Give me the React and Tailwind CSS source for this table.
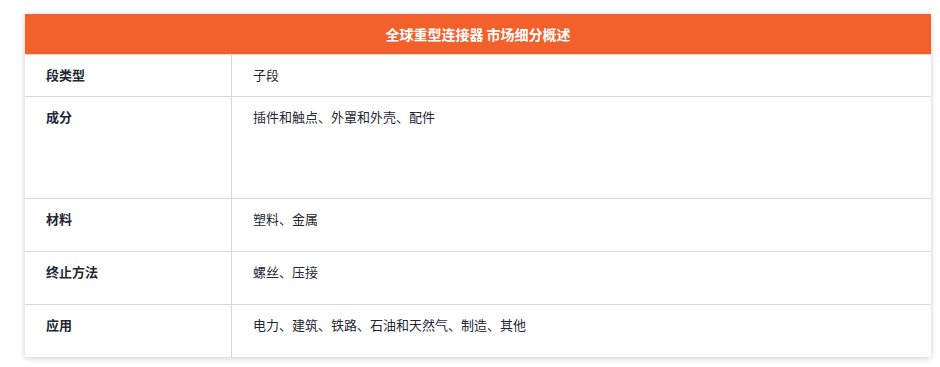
const rows = [
  { label: '段类型', value: '子段', h: 'h-[42px]' },
  { label: '成分', value: '插件和触点、外罩和外壳、配件', h: 'h-[102px]' },
  { label: '材料', value: '塑料、金属', h: 'h-[53px]' },
  { label: '终止方法', value: '螺丝、压接', h: 'h-[53px]' },
  { label: '应用', value: '电力、建筑、铁路、石油和天然气、制造、其他', h: 'h-[53px]' },
];

export default function App() {
  return (
    <div
      className="w-[940px] h-[367px] bg-white pt-[14px] pl-[25px]"
      style={{ fontFamily: '"Noto Sans CJK SC", "Noto Sans", sans-serif' }}
    >
      <div className="w-[906px] bg-white shadow-[0_1px_6px_rgba(0,0,0,0.2)]">
        <div className="h-[40px] bg-[#f2602c] flex items-center justify-center text-white text-[14px] font-bold">
          全球重型连接器 市场细分概述
        </div>
        {rows.map((r) => (
          <div key={r.label} className={`flex border-t border-[#d9d9d9] ${r.h}`}>
            <div className="w-[207px] shrink-0 border-r border-[#d9d9d9] pl-[21px] pt-[11px] text-[13px] leading-[18px] font-bold text-[#1f2733]">
              {r.label}
            </div>
            <div className="flex-1 pl-[21px] pt-[11px] text-[13px] leading-[18px] text-[#1f2733]">
              {r.value}
            </div>
          </div>
        ))}
      </div>
    </div>
  );
}
